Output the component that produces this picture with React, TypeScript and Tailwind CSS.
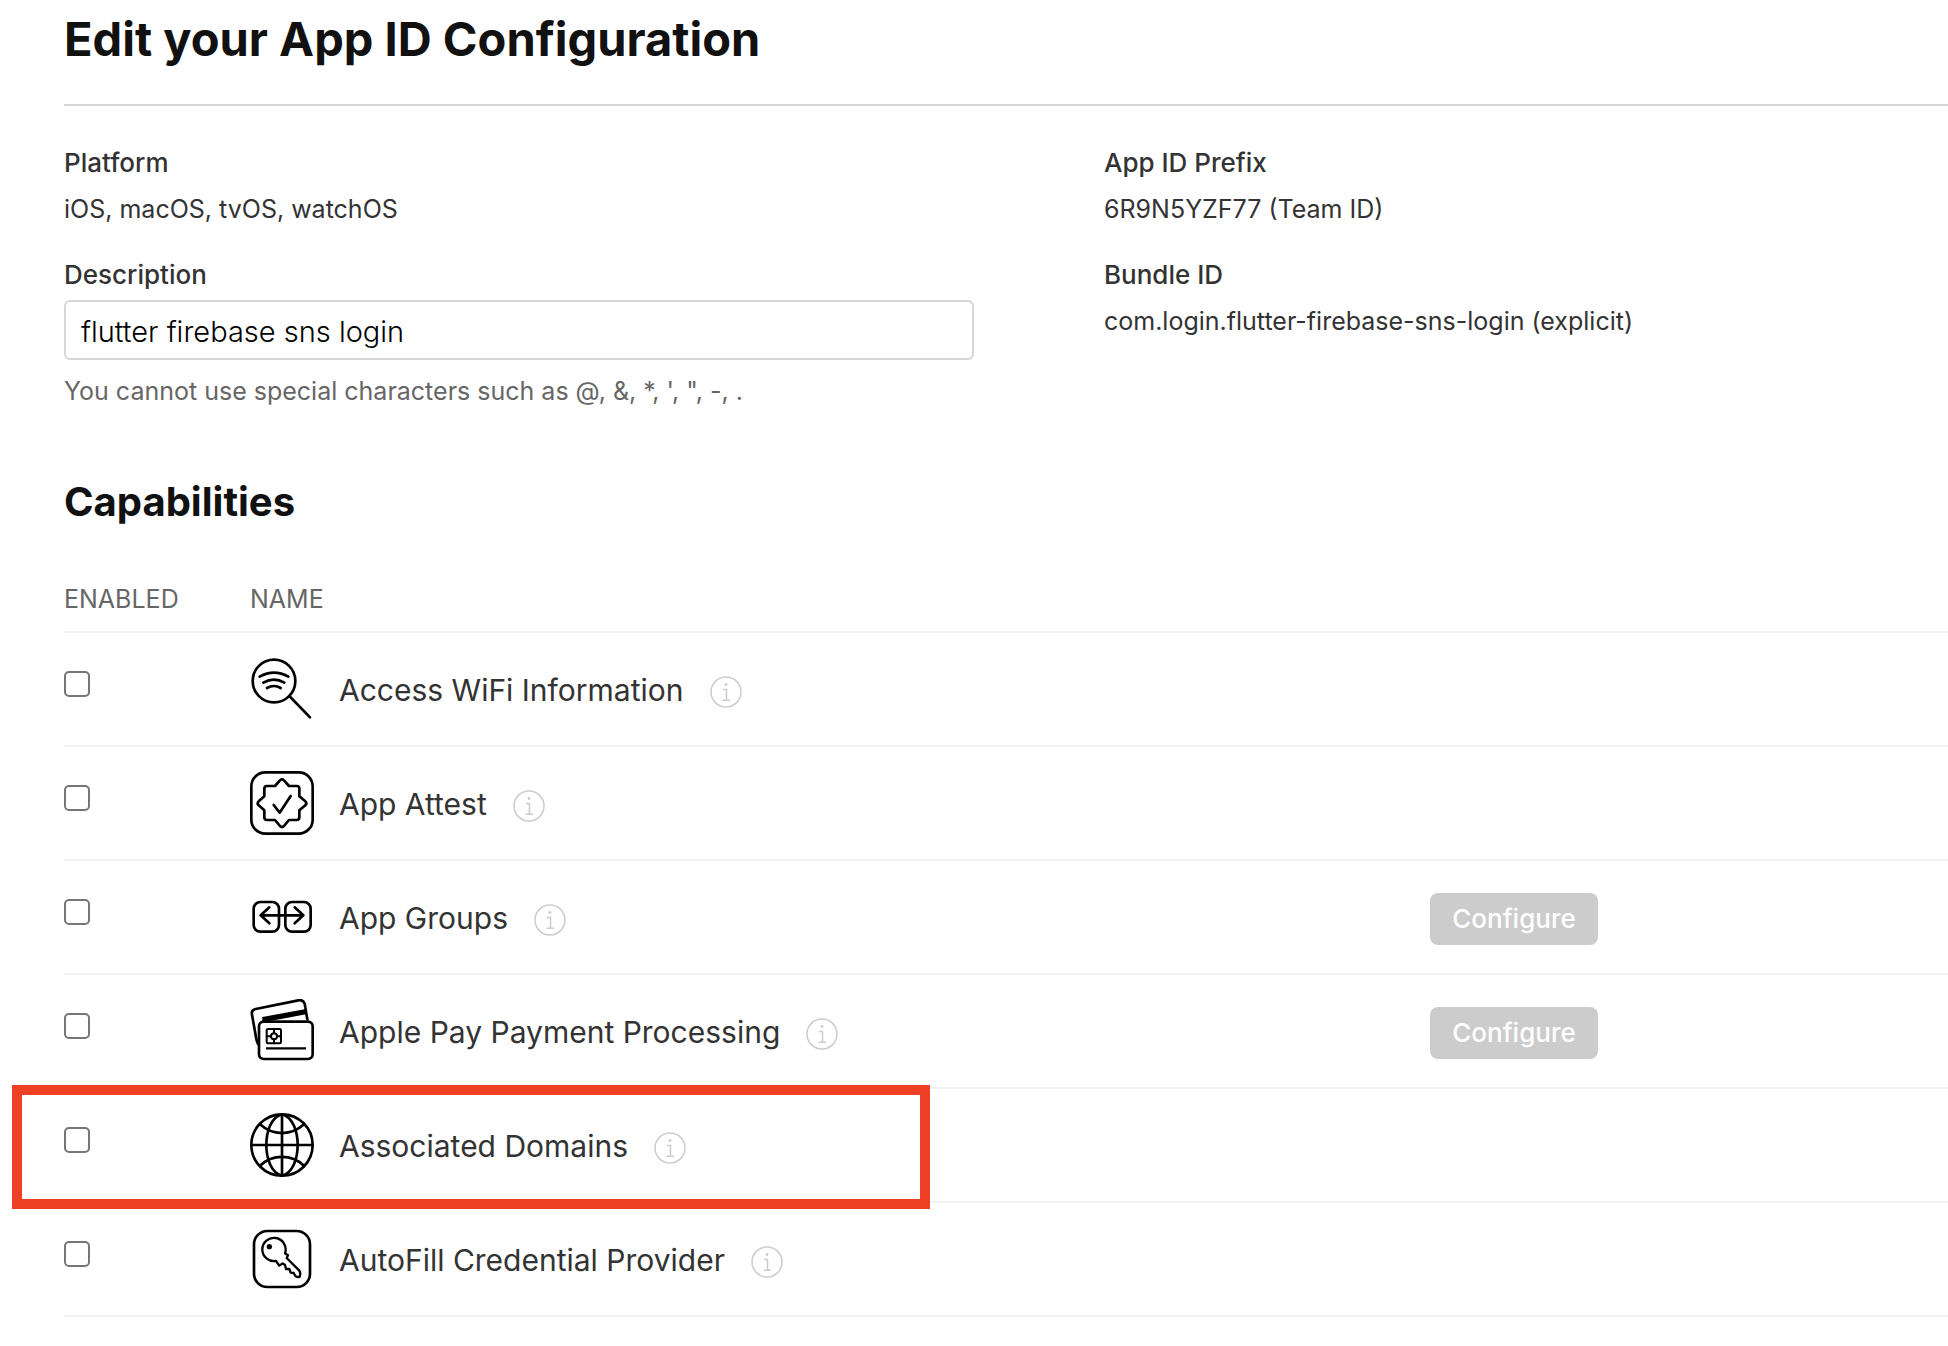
import type { ReactNode } from 'react';
import { useState } from 'react';

interface Capability {
    id: string;
    name: string;
    icon: ReactNode;
    configurable?: boolean;
    highlighted?: boolean;
}

interface IconProps {
    viewBox: string;
    children: ReactNode;
}

function Icon({ viewBox, children }: IconProps) {
    return (
        <svg
            className="size-16 shrink-0"
            viewBox={viewBox}
            fill="none"
            stroke="#000"
            strokeWidth={8}
            strokeLinecap="round"
            strokeLinejoin="round"
            aria-hidden="true"
        >
            {children}
        </svg>
    );
}

const capabilities: Capability[] = [
    {
        id: 'wifi',
        name: 'Access WiFi Information',
        icon: (
            <Icon viewBox="60 54 192 192">
                <circle cx="132" cy="126" r="64" />
                <path d="M178 171 240 235M89 113Q132 89 175 113M100 131Q132 113 163 131M111 147Q132 135 152 147" />
            </Icon>
        ),
    },
    {
        id: 'attest',
        name: 'App Attest',
        icon: (
            <Icon viewBox="60 51 192 192">
                <rect x="64" y="55" width="184" height="184" rx="42" />
                <path d="M135 96 150 79Q156 73 162 79L177 96H200Q208 96 208 104V127L226 142Q232 148 226 154L208 169V190Q208 198 200 198H177L162 216Q156 222 150 216L135 198H111Q103 198 103 190V169L86 154Q80 148 86 142L103 127V104Q103 96 111 96Z" />
                <path d="M131 153 149 176 182 126" />
            </Icon>
        ),
    },
    {
        id: 'groups',
        name: 'App Groups',
        configurable: true,
        icon: (
            <Icon viewBox="60 48 192 192">
                <rect x="71" y="99" width="76" height="89" rx="20" />
                <rect x="166" y="99" width="76" height="89" rx="20" />
                <path d="M92 139H220M118 115 92 139 118 163M194 115 220 139 194 163" />
            </Icon>
        ),
    },
    {
        id: 'apple-pay',
        name: 'Apple Pay Payment Processing',
        configurable: true,
        icon: (
            <Icon viewBox="60 45 192 192">
                <path d="M84 180Q79 168 78 160L66 92Q63 78 77 75L205 49Q220 46 224 59L232 106" />
                <path d="M97 99 228 75V91L120 111H97Z" fill="#000" stroke="none" />
                <rect x="87" y="113" width="161" height="112" rx="14" />
                <g strokeWidth="6">
                    <rect x="110" y="135" width="43" height="43" rx="4" />
                    <circle cx="132" cy="157" r="9" />
                    <path d="M132 136V147M132 167V178M111 157H122M142 157H152" />
                </g>
                <path d="M108 193H228" strokeWidth="7" strokeLinecap="butt" />
            </Icon>
        ),
    },
    {
        id: 'domains',
        name: 'Associated Domains',
        highlighted: true,
        icon: (
            <Icon viewBox="60 57 192 192">
                <circle cx="156" cy="153" r="92" />
                <path d="M156 61V245M64 153H248" />
                <path d="M156 61C122 70 109 115 109 153S122 236 156 245C190 236 203 191 203 153S190 70 156 61Z" />
                <path d="M90 91C128 126 184 126 222 91M90 215C128 180 184 180 222 215" />
            </Icon>
        ),
    },
    {
        id: 'autofill',
        name: 'AutoFill Credential Provider',
        icon: (
            <Icon viewBox="60 54 192 192">
                <rect x="72" y="66" width="168" height="168" rx="40" />
                <path
                    d="M165 133A35 35 0 1 0 138 156L148 170 158 163 165 168 168 180 178 180 182 191 191 192 196 201Q204 206 209 203Q213 194 208 185L170 147 174 139Z"
                    strokeWidth="7"
                />
                <circle cx="118" cy="113" r="8" fill="#000" stroke="none" />
            </Icon>
        ),
    },
];

function InfoButton({ name }: { name: string }) {
    return (
        <button type="button" aria-label={`About ${name}`} className="mt-1.5 ml-[26px] size-8 shrink-0">
            <svg viewBox="0 0 32 32" fill="none" stroke="#ccc" strokeWidth={1.5} aria-hidden="true">
                <circle cx="16" cy="16" r="15" />
                <path d="M13 13.5H16.5V24M12.5 24.25H20" />
                <circle cx="16" cy="8.5" r="1.4" fill="#ccc" stroke="none" />
            </svg>
        </button>
    );
}

function Detail({ label, value }: { label: string; value: string }) {
    return (
        <div>
            <dt className="text-[26px] leading-[46px] font-medium">{label}</dt>
            <dd>{value}</dd>
        </div>
    );
}

function CapabilityRow({ capability }: { capability: Capability }) {
    const { id, name, icon, configurable, highlighted } = capability;
    const [enabled, setEnabled] = useState(false);

    return (
        <tr className="h-[114px] border-b-2 border-[#f2f2f2]">
            <td className="relative">
                <input
                    id={id}
                    type="checkbox"
                    checked={enabled}
                    onChange={(e) => setEnabled(e.target.checked)}
                    className="mb-2.5 block size-[26px] appearance-none rounded-[5px] border-2 border-[#767676] bg-white checked:bg-[#0070c9]"
                />
                {highlighted && (
                    <div className="pointer-events-none absolute -top-1 -left-[52px] h-[124px] w-[918px] border-10 border-[#ed4025]" />
                )}
            </td>
            <td>
                <div className="flex items-center">
                    {icon}
                    <label htmlFor={id} className="ml-[25px] pt-0.5 text-[30px] leading-10">
                        {name}
                    </label>
                    <InfoButton name={name} />
                </div>
            </td>
            <td>
                {configurable && (
                    <button
                        type="button"
                        disabled
                        className="mt-1 block h-[52px] w-[168px] rounded-lg bg-[#ccc] pb-0.5 text-[26px] font-medium text-white"
                    >
                        Configure
                    </button>
                )}
            </td>
        </tr>
    );
}

export default function App() {
    const [description, setDescription] = useState('flutter firebase sns login');

    return (
        <main className="bg-white pt-[11px] pl-16 font-['Inter',sans-serif] text-[#333]">
            <h1 className="border-b-2 border-[#d6d6d6] pb-[37px] text-[47px] leading-14 font-bold text-[#111]">
                Edit your App ID Configuration
            </h1>

            <div className="mt-[34px] grid grid-cols-[1040fr_844fr] text-[25px] leading-[46px]">
                <div className="flex flex-col gap-5">
                    <dl>
                        <Detail label="Platform" value="iOS, macOS, tvOS, watchOS" />
                    </dl>
                    <div>
                        <label htmlFor="description" className="block text-[26px] leading-[46px] font-medium">
                            Description
                        </label>
                        <input
                            id="description"
                            type="text"
                            value={description}
                            onChange={(e) => setDescription(e.target.value)}
                            className="mt-0.5 block h-[60px] w-7/8 rounded-md border-2 border-[#d6d6d6] px-[15px] pt-0.5 text-[29px] font-light text-black"
                        />
                        <p className="mt-2 text-[#666]">
                            You cannot use special characters such as @, &amp;, *, ', ", -, .
                        </p>
                    </div>
                </div>
                <dl className="flex flex-col gap-5">
                    <Detail label="App ID Prefix" value="6R9N5YZF77 (Team ID)" />
                    <Detail label="Bundle ID" value="com.login.flutter-firebase-sns-login (explicit)" />
                </dl>
            </div>

            <h2 className="mt-16 text-[40px] leading-12 font-bold text-[#111]">Capabilities</h2>

            <table className="mt-[57px] w-full table-fixed border-collapse text-left">
                <colgroup>
                    <col className="w-[186px]" />
                    <col />
                    <col className="w-[518px]" />
                </colgroup>
                <thead>
                    <tr className="border-b-2 border-[#f2f2f2] text-[25px] leading-8 text-[#666]">
                        <th className="pb-4 font-normal">ENABLED</th>
                        <th className="pb-4 font-normal">NAME</th>
                        <td />
                    </tr>
                </thead>
                <tbody>
                    {capabilities.map((capability) => (
                        <CapabilityRow key={capability.id} capability={capability} />
                    ))}
                </tbody>
            </table>
        </main>
    );
}
